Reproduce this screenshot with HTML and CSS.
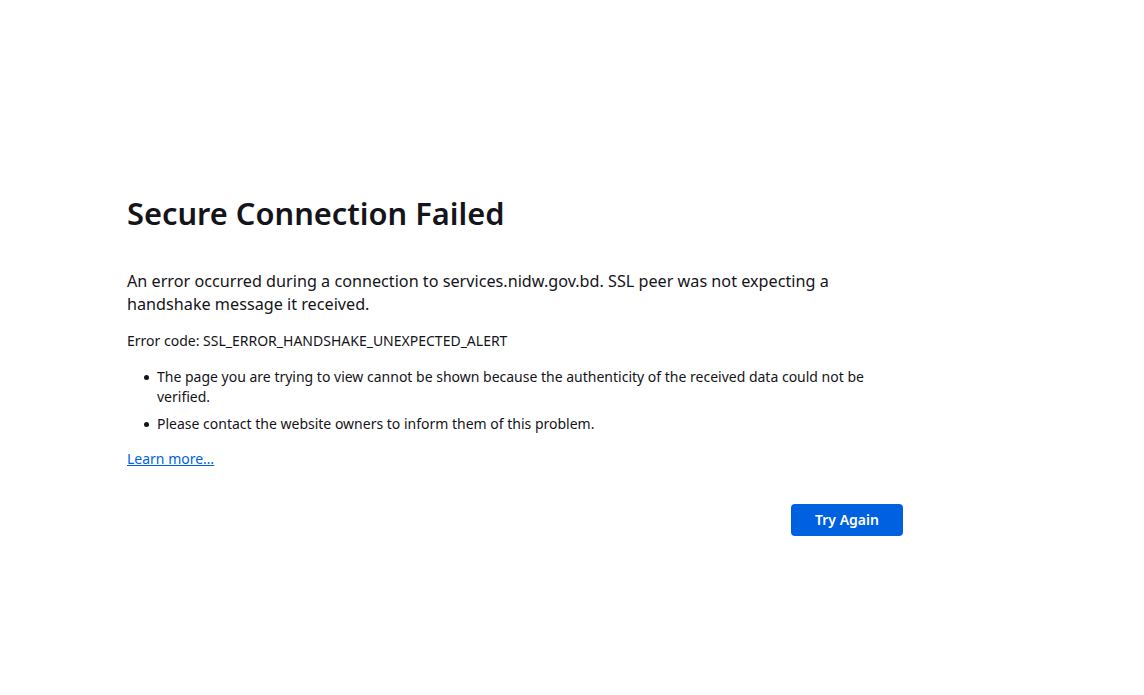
FILE: index.html
```html
<!DOCTYPE html>
<html lang="en">
<head>
  <meta charset="UTF-8" />
  <title>Problem loading page</title>
  <link rel="stylesheet" href="styles.css">
</head>
<body>
  <main class="container">
    <h1 class="title">Secure Connection Failed</h1>
    <p class="intro">An error occurred during a connection to services.nidw.gov.bd. SSL peer was not expecting a handshake message it received.</p>
    <p class="code">Error code: SSL_ERROR_HANDSHAKE_UNEXPECTED_ALERT</p>
    <ul class="details">
      <li>The page you are trying to view cannot be shown because the authenticity of the received data could not be verified.</li>
      <li>Please contact the website owners to inform them of this problem.</li>
    </ul>
    <a class="learn" href="#">Learn more…</a>
    <div class="actions">
      <button class="retry">Try Again</button>
    </div>
  </main>
</body>
</html>
```

FILE: styles.css
```css
* { margin: 0; padding: 0; box-sizing: border-box; }
body {
  font-family: 'Noto Sans', sans-serif;
  font-size: 14px;
  color: #15141a;
  background: #fff;
}
.container {
  width: 776px;
  margin-left: 127px;
  padding-top: 190px;
}
.title {
  font-size: 30.8px;
  font-weight: 600;
  line-height: 46px;
  margin-bottom: 34px;
}
.intro {
  font-size: 16.2px;
  line-height: 22.5px;
  margin-bottom: 16px;
}
.code {
  line-height: 20px;
  margin-bottom: 16px;
}
.details {
  list-style: none;
  padding-left: 30px;
}
.details li {
  position: relative;
  line-height: 19.5px;
  margin-bottom: 8px;
}
.details li::before {
  content: "";
  position: absolute;
  left: -13px;
  top: 8px;
  width: 5px;
  height: 5px;
  border-radius: 50%;
  background: #15141a;
}
.learn {
  display: inline-block;
  margin-top: 7px;
  color: #0061e0;
  line-height: 20px;
}
.actions {
  display: flex;
  justify-content: flex-end;
  margin-top: 35px;
}
.retry {
  width: 112px;
  height: 32px;
  border: none;
  border-radius: 4px;
  background: #0061e0;
  color: #fff;
  font-family: inherit;
  font-size: 14px;
  font-weight: 600;
}
```
